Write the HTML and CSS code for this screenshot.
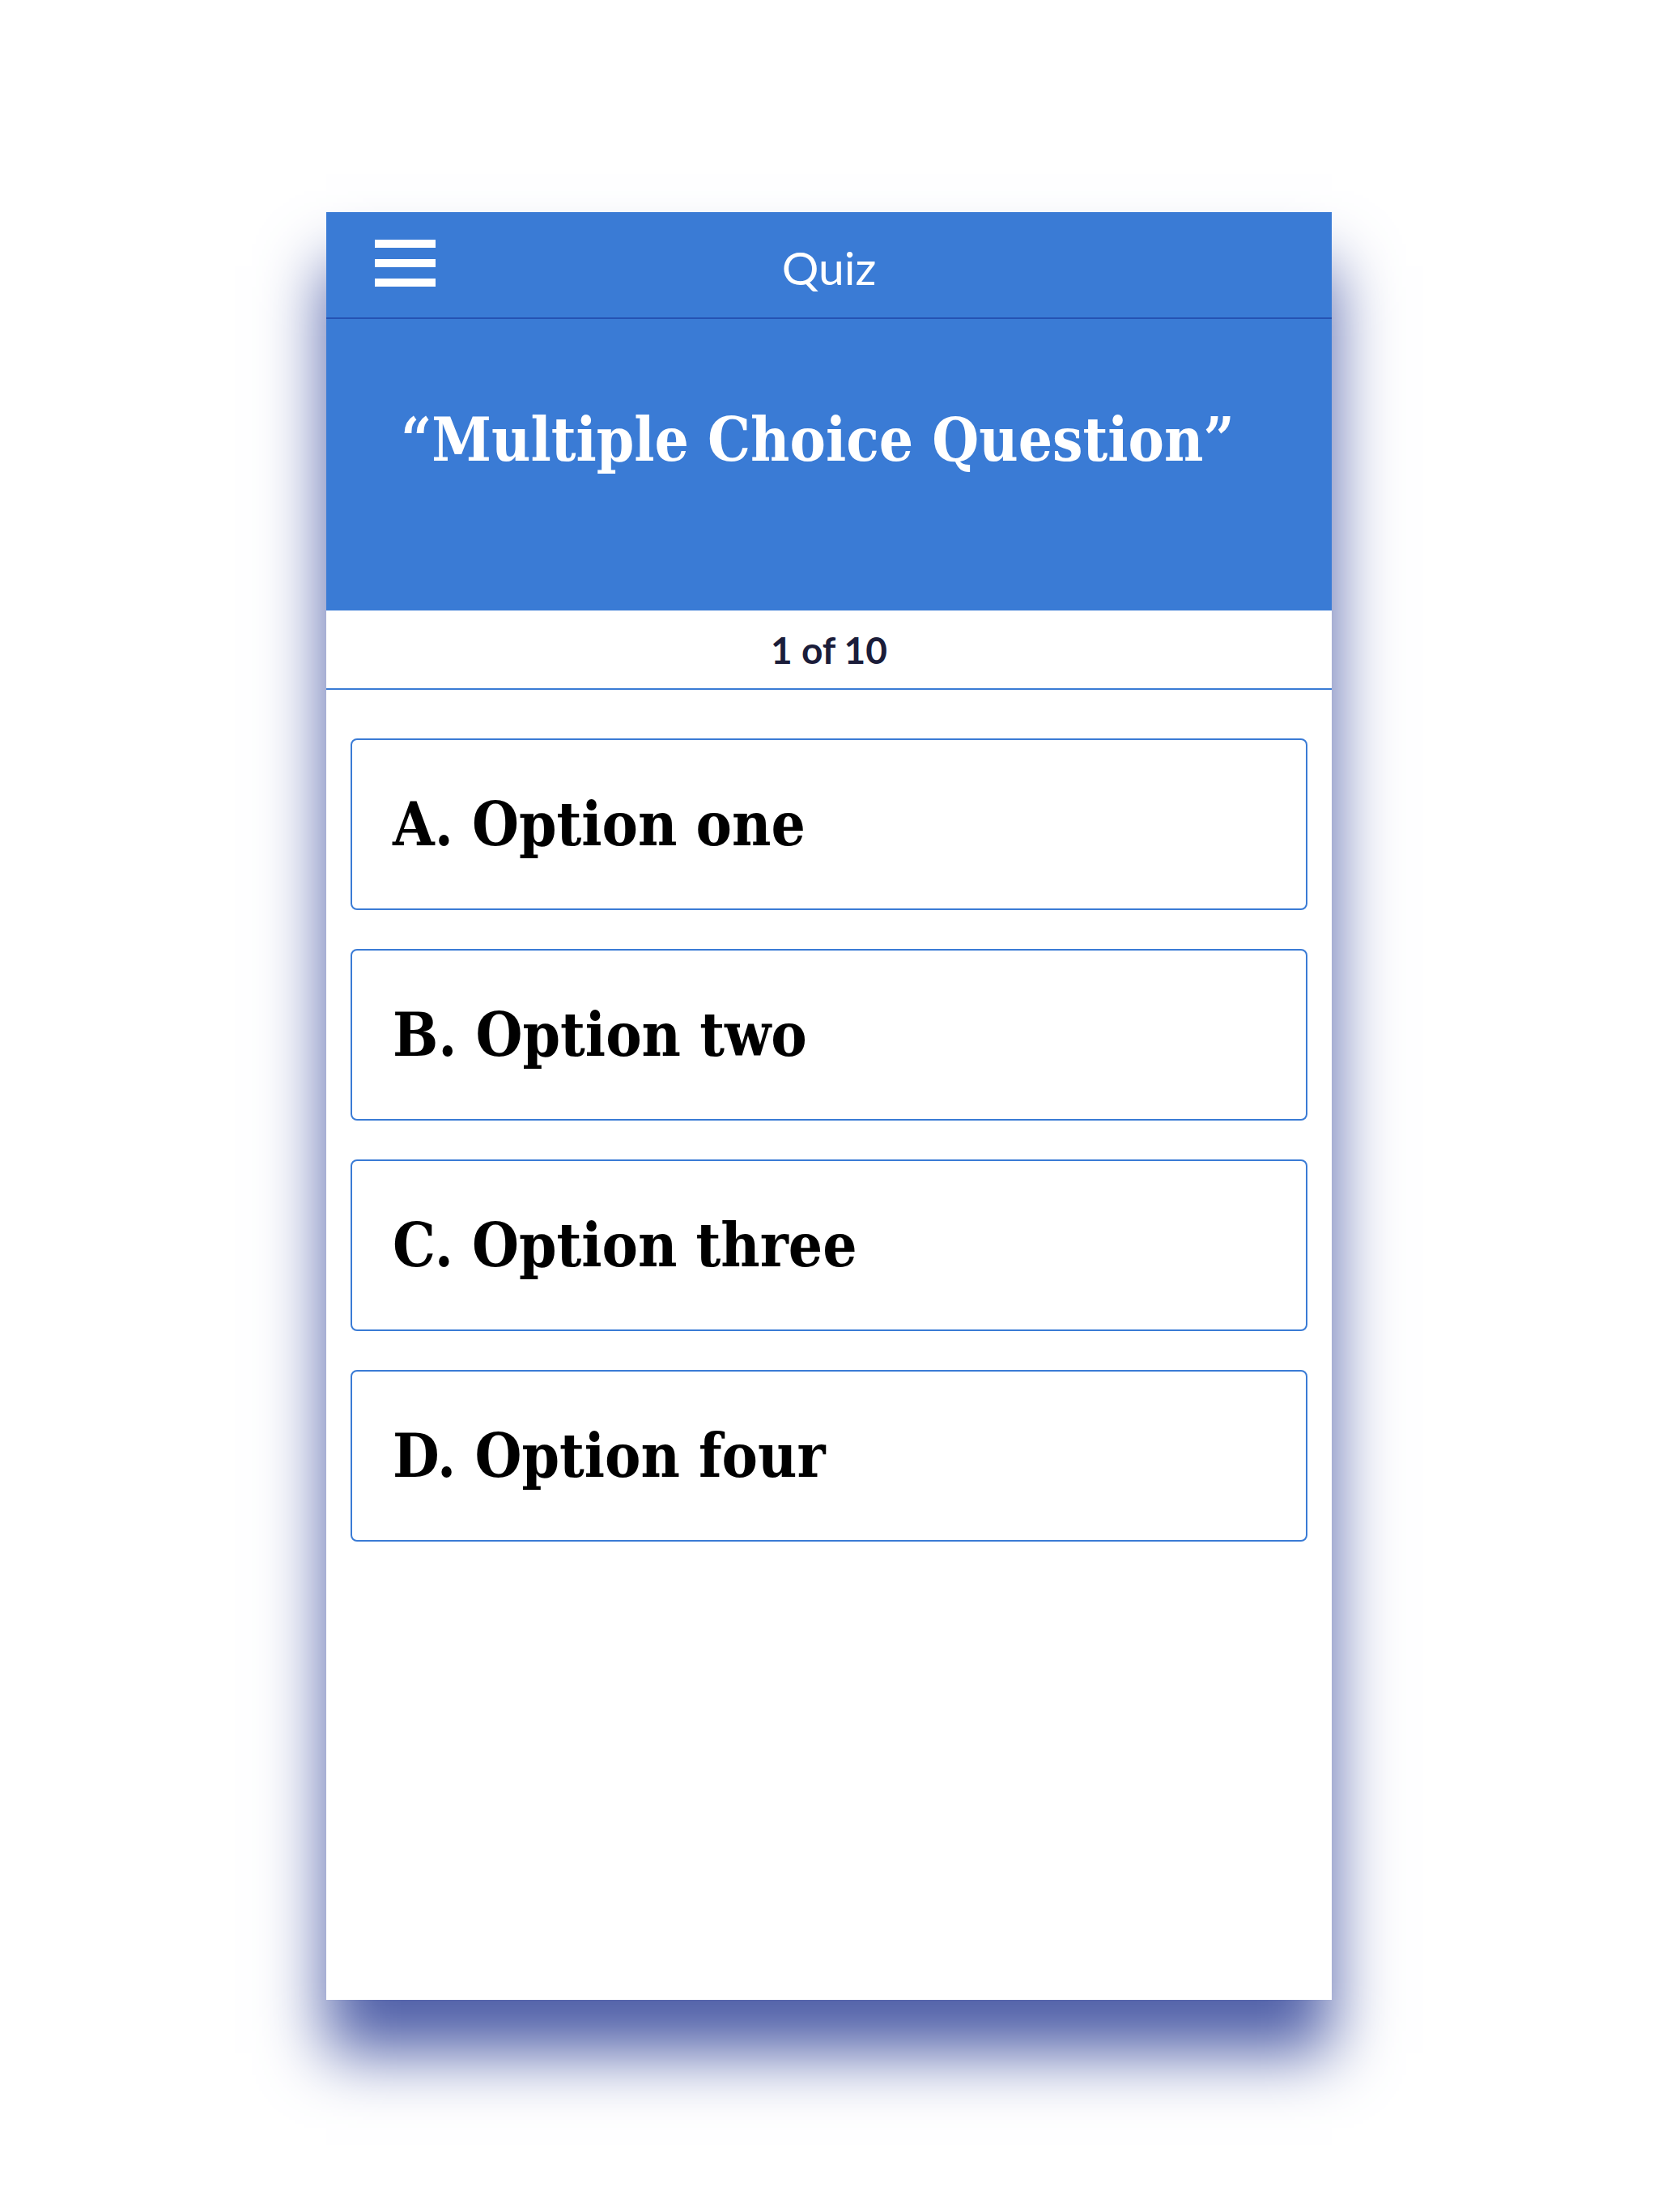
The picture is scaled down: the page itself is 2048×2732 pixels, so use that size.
FILE: index.html
```html
<html lang="en">
  <head>
    <meta name="viewport" content="width=device-width,initial-scale=1">
    <title>Quiz</title>
    <link rel="stylesheet" href="styles.css">
  </head>
<body>
  <div class="phone">
    <div class="topbar">
      <div class="menu">
        <span></span>
        <span></span>
        <span></span>
      </div>
      <div class="topbar-title">Quiz</div>
    </div>
    <div class="question">“Multiple Choice Question”</div>
    <div class="progress">1 of 10</div>
    <div class="options">
      <div class="option">A. Option one</div>
      <div class="option">B. Option two</div>
      <div class="option">C. Option three</div>
      <div class="option">D. Option four</div>
    </div>
  </div>
</body>
</html>
```

FILE: styles.css
```css
html, body {
  padding: 0;
  margin: 0;
  background: #fff;
}
.phone {
  width: 1242px;
  height: 2208px;
  margin: 262px auto 0;
  background: #fff;
  box-shadow: 0 66px 76px #4f5fa8;
}
.topbar {
  position: relative;
  height: 130px;
  background: #3a7bd5;
  border-bottom: 2px solid #2552b3;
  display: flex;
  align-items: center;
  justify-content: center;
}
.menu {
  position: absolute;
  left: 60px;
  top: 34px;
  display: flex;
  flex-direction: column;
  gap: 14px;
}
.menu span {
  display: block;
  width: 75px;
  height: 10px;
  background: #fff;
}
.topbar-title {
  font-family: Lato, "Open Sans", sans-serif;
  font-size: 57px;
  color: #fff;
  margin-top: 6px;
}
.question {
  height: 360px;
  box-sizing: border-box;
  padding: 112px 0 0 92px;
  background: #3a7bd5;
  color: #fff;
  font-family: "DejaVu Serif Condensed", "DejaVu Serif", serif;
  font-weight: bold;
  font-size: 74px;
  line-height: 1;
}
.progress {
  height: 96px;
  border-bottom: 2px solid #3a7bd5;
  display: flex;
  align-items: center;
  justify-content: center;
  font-family: Lato, "Open Sans", sans-serif;
  font-weight: bold;
  font-size: 46px;
  color: #1b1d3a;
}
.options {
  padding: 60px 30px 0;
  display: flex;
  flex-direction: column;
  gap: 48px;
}
.option {
  height: 212px;
  box-sizing: border-box;
  border: 2px solid #3a7bd5;
  border-radius: 8px;
  padding-left: 50px;
  display: flex;
  align-items: center;
  font-family: "DejaVu Serif Condensed", "DejaVu Serif", serif;
  font-weight: bold;
  font-size: 74px;
  color: #000;
}
```
